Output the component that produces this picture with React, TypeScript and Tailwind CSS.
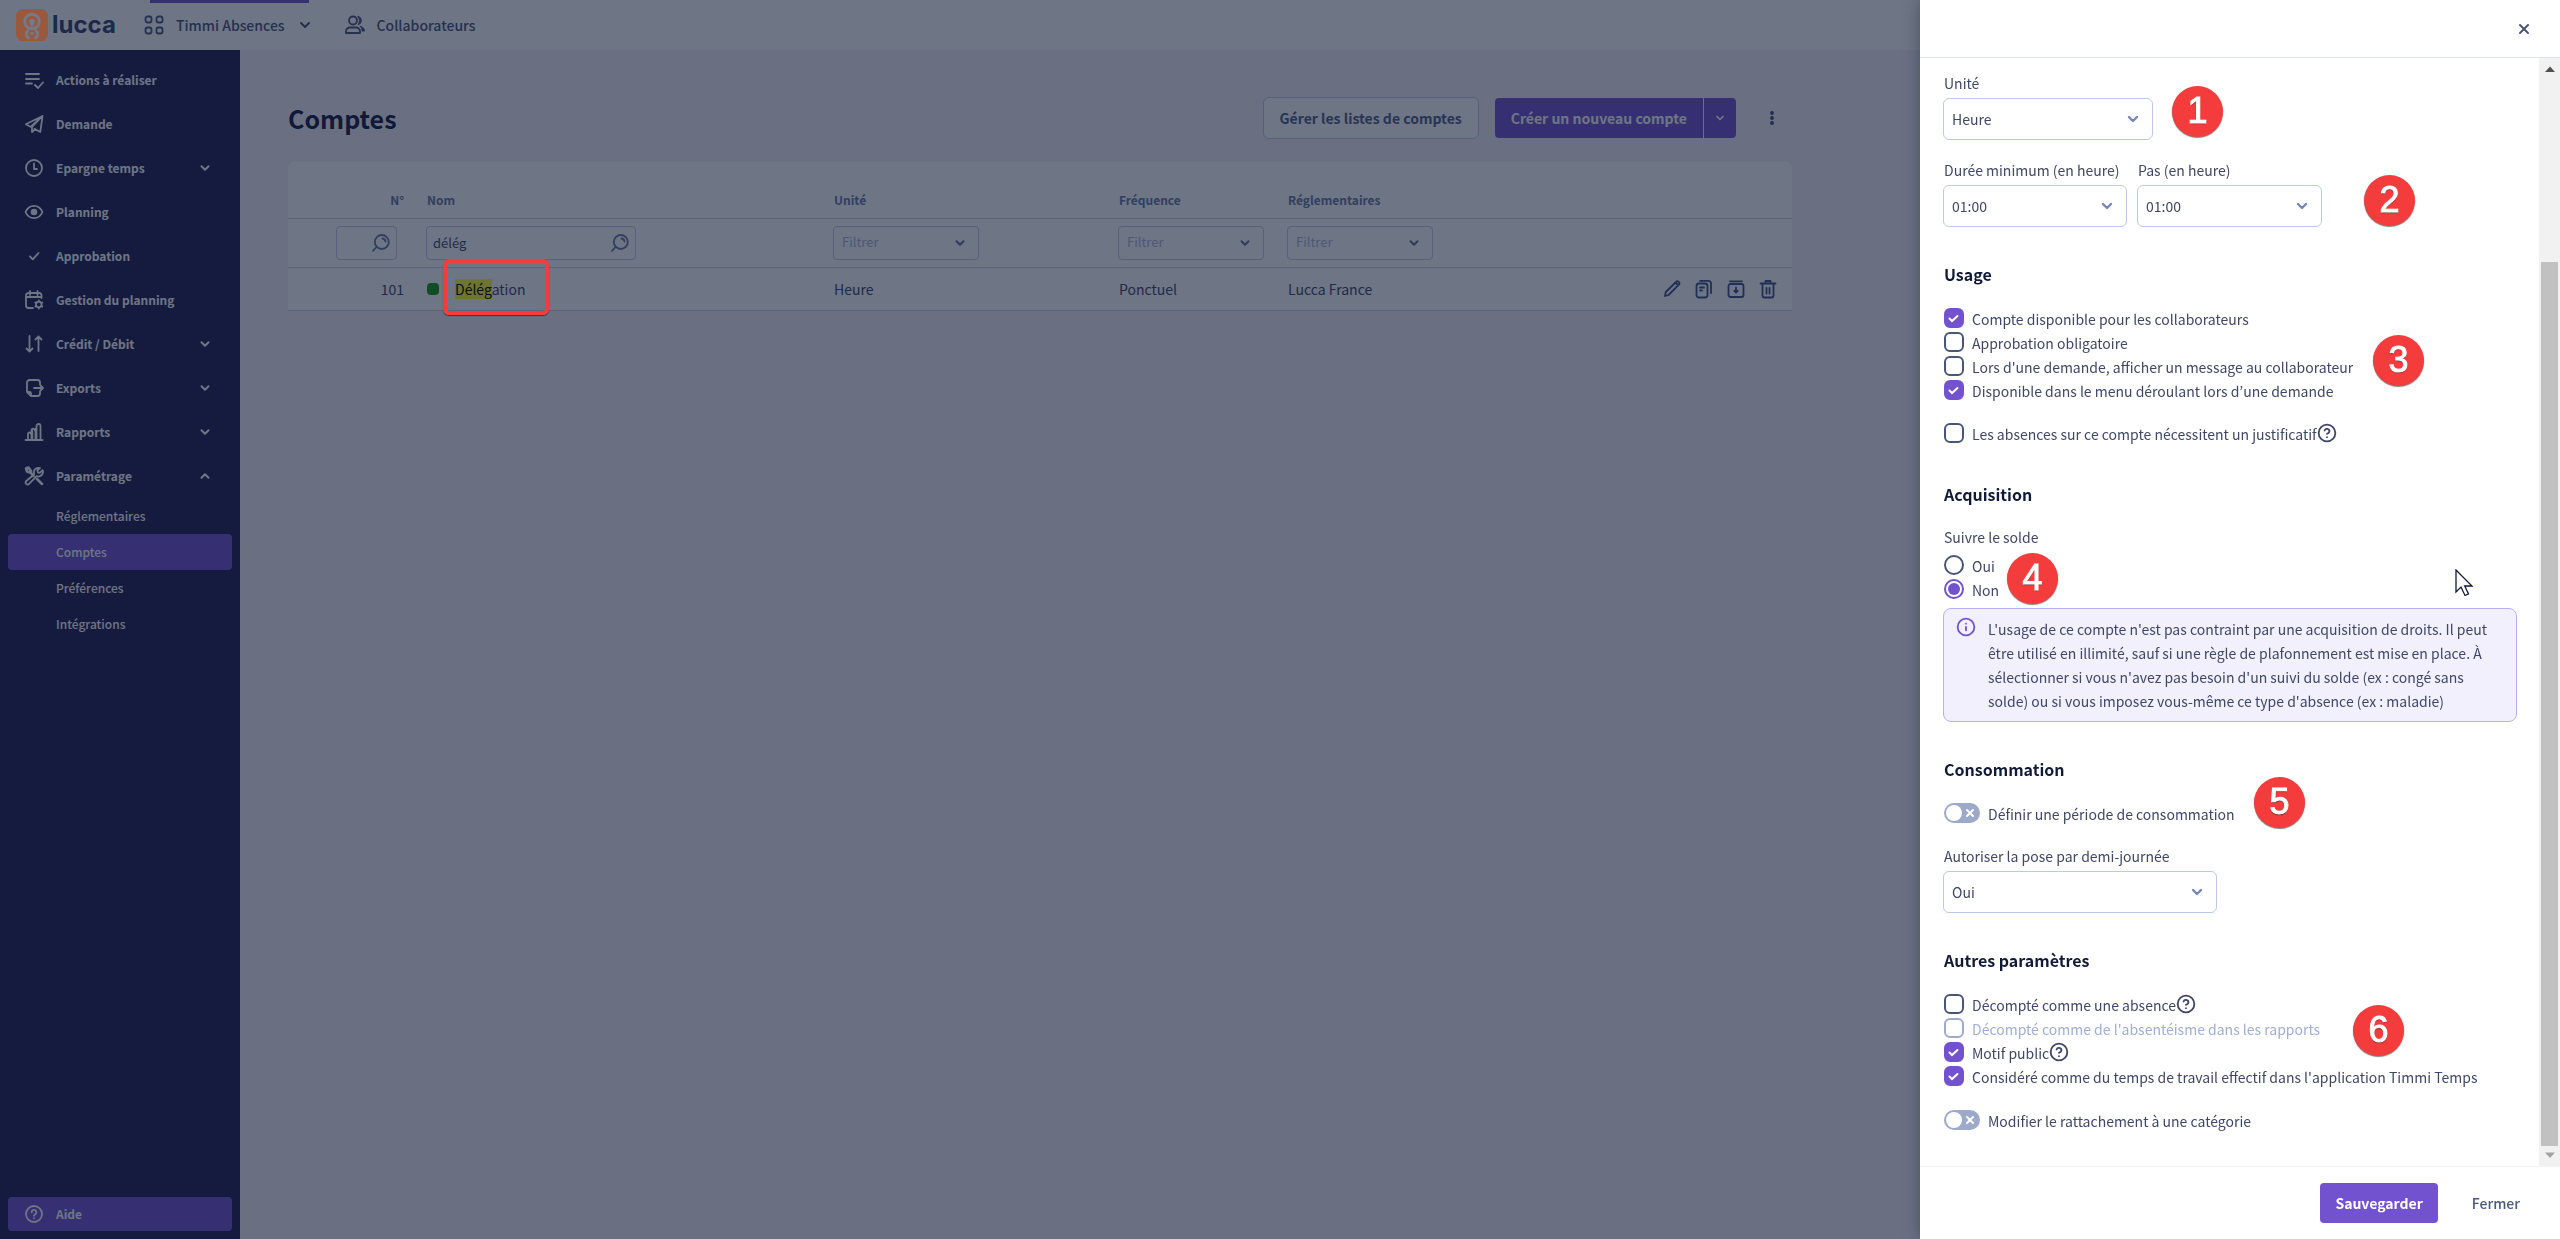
import type { ReactNode } from "react";
import { ChevronDown, ChevronUp, CircleHelp, Info, X } from "lucide-react";

/* ---------- icons ---------- */

type IconProps = { className?: string; children?: ReactNode };

function Icon({ className = "size-5", children }: IconProps) {
  return (
    <svg
      viewBox="0 0 20 20"
      className={className}
      fill="none"
      stroke="currentColor"
      strokeWidth="1.8"
      strokeLinecap="round"
      strokeLinejoin="round"
      aria-hidden="true"
    >
      {children}
    </svg>
  );
}

const ListCheck = () => (
  <Icon>
    <path d="M2 4h13M2 9h13M2 13.5h6M11 15l3 3 5-5.500" />
  </Icon>
);
const Plane = () => (
  <Icon>
    <path d="M18.500 2 1.800 10.200l4.700 2.600L18.500 2 16.300 18 10.500 14.800M18.500 2 8 13v5l3-3" />
  </Icon>
);
const Clock = () => (
  <Icon>
    <circle cx="10" cy="10" r="8" />
    <path d="M10 5.500V11h3" />
  </Icon>
);
const Eye = () => (
  <Icon>
    <path d="M1.500 10C5 1.800 15 1.800 18.500 10 15 18.200 5 18.200 1.500 10Z" />
    <circle cx="10" cy="10" r="2.400" fill="currentColor" />
  </Icon>
);
const SmallCheck = () => (
  <Icon>
    <path d="m6 10.500 2.800 2.800L14.500 7" />
  </Icon>
);
const CalendarGear = () => (
  <Icon>
    <path d="M9 18H4.500A2.500 2.500 0 0 1 2 15.500V5.500A2.500 2.500 0 0 1 4.500 3h11A2.500 2.500 0 0 1 17.500 5.500V8M2 7h15.500M6 1v4M13.500 1v4" />
    <circle cx="14.800" cy="14.500" r="2.800" />
    <path d="M14.800 10.500v1M14.800 17.500v1M11.300 12.500l.9.500M17.400 16l.9.500M18.300 12.500l-.9.500M12.200 16l-.9.500" />
  </Icon>
);
const UpDown = () => (
  <Icon>
    <path d="M5.500 2v15M2.500 14.500l3 3 3-3M14.500 17V2.500M11.500 5.500l3-3 3 3" />
  </Icon>
);
const ExportIcon = () => (
  <Icon>
    <path d="M16 6.500V4.500A2.500 2.500 0 0 0 13.500 2h-8A2.500 2.500 0 0 0 3 4.500V14l4 4h6.500a2.500 2.500 0 0 0 2.500-2.500v-2M3 14h2.500A1.500 1.500 0 0 1 7 15.500V18M10 10h9M16.500 7.500 19 10l-2.500 2.500" />
  </Icon>
);
const Bars = () => (
  <Icon>
    <path d="M1.500 18h17M4 17.500V12a1 1 0 0 1 3 0M8.300 17.500V9M7.500 17V8.500a1.500 1.500 0 0 1 3.500 0M11.500 17.500V7M12.500 17.500V4a2 2 0 0 1 4 0v13.500" />
  </Icon>
);
const Tools = () => (
  <Icon>
    <path d="M2 2.500 4.500 1.500 7 5v2L9.500 10M2 2.500 3 5.500l3 1.200M13 13l5 5" strokeWidth="2.500" />
    <path d="M14.500 1.800a4.600 4.600 0 0 0-4.300 6.400L2.300 15a2 2 0 0 0 2.800 2.900l7.500-7.700a4.600 4.600 0 0 0 6-6l-2.800 2.600-2-.4-.4-2 2.600-2.400a4 4 0 0 0-1.500-.2Z" />
  </Icon>
);
const Help = () => (
  <Icon>
    <circle cx="10" cy="10" r="8" />
    <path d="M7.700 8.300a2.300 2.300 0 1 1 3.500 1.900c-.8.500-1.200.8-1.200 1.600M10 14.200v.1" />
  </Icon>
);
const Apps = () => (
  <Icon className="size-5">
    <rect x="1.500" y="1.500" width="6" height="6" rx="2" />
    <rect x="12.500" y="1.500" width="6" height="6" rx="2" />
    <rect x="1.500" y="12.500" width="6" height="6" rx="2" />
    <rect x="12.500" y="12.500" width="6" height="6" rx="2" />
  </Icon>
);
const People = () => (
  <Icon className="size-5">
    <circle cx="8" cy="5.500" r="4" />
    <path d="M1 18v-1.500a4 4 0 0 1 4-4h6a4 4 0 0 1 4 4V18Z" />
    <path
      d="M13 1.300a4.300 4.300 0 0 1 0 8.400 7 7 0 0 0 0-8.400ZM15.500 11.500c2.500.5 4 2.200 4 4.500h-2.500c0-2-.5-3.500-1.500-4.500Z"
      fill="currentColor"
      strokeWidth="1"
    />
  </Icon>
);
const Search = () => (
  <Icon className="size-5">
    <circle cx="10.800" cy="9" r="7" />
    <path d="m5.500 14-3.500 3.800M11.500 5.500a3.500 3.500 0 0 1 3 3" />
  </Icon>
);
const Pencil = () => (
  <Icon className="size-5">
    <path d="M3 17l.8-4L14.500 2.500c1.600-1 3.600 1 2.800 2.700L6.600 16 3 17ZM14 4l2 2" />
  </Icon>
);
const Copy = () => (
  <Icon className="size-5">
    <rect x="2.500" y="4.500" width="11" height="14" rx="2.500" />
    <path d="M6 1.800h8.500A2.500 2.500 0 0 1 17 4.300V14M6 8.500h4M6 11.500h2" />
  </Icon>
);
const Archive = () => (
  <Icon className="size-5">
    <rect x="2.500" y="5" width="15" height="13" rx="2" />
    <path d="M4 2.300h12M10 8.500v5M8.300 11.800 10 13.500l1.700-1.700" />
  </Icon>
);
const Trash = () => (
  <Icon className="size-5">
    <path d="M2.500 4.500h15M7.500 4.500V2h5v2.500M4.500 5v11.500A2 2 0 0 0 6.500 18.500h7a2 2 0 0 0 2-2V5M8.500 9v5.500M11.500 9v5.500" />
  </Icon>
);

function Logo() {
  return (
    <svg viewBox="0 0 32 32" className="size-8" aria-hidden="true">
      <rect width="32" height="32" rx="7" fill="#99593f" />
      <g fill="none" stroke="#757a89" strokeWidth="3">
        <circle cx="16" cy="12.500" r="7.300" />
        <path d="M13.500 29.500A4.600 4.600 0 0 1 13 21M18.500 29.500A4.600 4.600 0 0 0 19 21" />
      </g>
      <circle cx="16" cy="12.500" r="2.800" fill="#757a89" />
      <path d="M14.500 12.500h3v5h-3Z" fill="#757a89" />
      <circle cx="16" cy="24.500" r="1.800" fill="#757a89" />
    </svg>
  );
}

/* ---------- navigation ---------- */

type NavEntry = { label: string; icon: ReactNode; state?: "closed" | "open" };

const nav: NavEntry[] = [
  { label: "Actions à réaliser", icon: <ListCheck /> },
  { label: "Demande", icon: <Plane /> },
  { label: "Epargne temps", icon: <Clock />, state: "closed" },
  { label: "Planning", icon: <Eye /> },
  { label: "Approbation", icon: <SmallCheck /> },
  { label: "Gestion du planning", icon: <CalendarGear /> },
  { label: "Crédit / Débit", icon: <UpDown />, state: "closed" },
  { label: "Exports", icon: <ExportIcon />, state: "closed" },
  { label: "Rapports", icon: <Bars />, state: "closed" },
  { label: "Paramétrage", icon: <Tools />, state: "open" },
];

const subNav = ["Réglementaires", "Comptes", "Préférences", "Intégrations"];

function Sidebar() {
  return (
    <nav className="flex w-60 shrink-0 flex-col bg-[#201e50] px-2 py-2 text-xs font-bold text-white">
      {nav.map(({ label, icon, state }) => (
        <a key={label} href="#" className="flex h-11 items-center gap-3 pr-5 pl-4">
          {icon}
          <span className="flex-1">{label}</span>
          {state === "closed" && <ChevronDown className="size-3.5" strokeWidth={3.5} />}
          {state === "open" && <ChevronUp className="size-3.5" strokeWidth={3.5} />}
        </a>
      ))}
      <div className="flex flex-col font-medium">
        {subNav.map((label) => (
          <a
            key={label}
            href="#"
            className={
              label === "Comptes"
                ? "flex h-9 items-center rounded bg-[#7352cf] pl-12"
                : "flex h-9 items-center pl-12"
            }
          >
            {label}
          </a>
        ))}
      </div>
      <a href="#" className="mt-auto flex h-[34px] items-center gap-3 rounded bg-[#7352cf] pl-4">
        <Help />
        Aide
      </a>
    </nav>
  );
}

function TopBar() {
  return (
    <header className="flex h-[50px] shrink-0 items-center bg-white pl-4 text-sm font-medium text-[#4a557c] shadow-sm">
      <a href="#" className="flex w-[134px] items-center gap-1">
        <span className="relative z-20">
          <Logo />
        </span>
        <span className="font-['Inter',sans-serif] text-2xl font-bold text-[#383f70]">lucca</span>
      </a>
      <button className="flex h-full items-center gap-3 border-t-[3px] border-[#7352cf] pb-[3px]">
        <span className="-ml-1.5">
          <Apps />
        </span>
        Timmi Absences
        <ChevronDown className="-mr-1 size-4" strokeWidth={3} />
      </button>
      <a href="#" className="ml-9 flex items-center gap-3">
        <People />
        Collaborateurs
      </a>
    </header>
  );
}

/* ---------- accounts table ---------- */

function FilterSelect({ label }: { label: string }) {
  return (
    <div className="grid w-[146px] items-center">
      <select
        aria-label={label}
        className="col-start-1 row-start-1 h-[34px] w-full appearance-none rounded border border-[#c5cbf0] bg-transparent px-2 text-[13px] text-[#adb7df]"
      >
        <option>Filtrer</option>
      </select>
      <ChevronDown
        className="pointer-events-none col-start-1 row-start-1 mr-3 size-3.5 justify-self-end text-[#5f6f9c]"
        strokeWidth={3.5}
      />
    </div>
  );
}

function SearchBox({ label, value, wide }: { label: string; value: string; wide?: boolean }) {
  return (
    <div className={wide ? "grid w-[210px] items-center" : "ml-auto grid w-[61px] items-center"}>
      <input
        type="text"
        aria-label={label}
        defaultValue={value}
        className="col-start-1 row-start-1 h-[34px] w-full rounded border border-[#c5cbf0] bg-transparent pr-8 pl-1.5 text-[13px] text-[#404a70]"
      />
      <span className="pointer-events-none col-start-1 row-start-1 mr-1.5 justify-self-end text-[#6476a6]">
        <Search />
      </span>
    </div>
  );
}

function Accounts() {
  return (
    <main className="flex-1 bg-[#f6f3fb] px-12">
      <div className="max-w-[1504px]">
        <div className="flex items-center pt-[47px] pb-[22px]">
          <h1 className="flex-1 text-[25px] leading-[42px] font-bold text-[#141b40]">Comptes</h1>
          <button className="h-[42px] rounded-md border border-[#c5cbf0] bg-white px-4 text-sm font-bold text-[#50608c]">
            Gérer les listes de comptes
          </button>
          <div className="ml-4 flex h-10 text-sm font-bold text-white">
            <button className="rounded-l bg-[#7352cf] px-4">Créer un nouveau compte</button>
            <button
              aria-label="Autres créations"
              className="ml-px flex w-8 items-center justify-center rounded-r bg-[#7352cf]"
            >
              <ChevronDown className="size-3" strokeWidth={3.5} />
            </button>
          </div>
          <button aria-label="Plus d'actions" className="ml-4 flex w-10 justify-center text-[#3c4a7a]">
            <svg viewBox="0 0 4 14" className="h-3.5 w-1" fill="currentColor" aria-hidden="true">
              <circle cx="2" cy="2" r="1.900" />
              <circle cx="2" cy="7" r="1.900" />
              <circle cx="2" cy="12" r="1.900" />
            </svg>
          </button>
        </div>
        <div className="rounded-t-lg bg-white">
          <table className="w-full table-fixed text-left text-sm text-[#3c4670]">
            <colgroup>
              <col className="w-[128px]" />
              <col className="w-[407px]" />
              <col className="w-[285px]" />
              <col className="w-[169px]" />
              <col />
              <col className="w-[160px]" />
            </colgroup>
            <thead>
              <tr className="h-[57px] border-b border-[#d0d2f8] align-bottom text-xs leading-9 text-[#6878a8]">
                <th className="px-3 text-right font-bold">N°</th>
                <th className="px-[11px] font-bold">Nom</th>
                <th className="px-[11px] font-bold">Unité</th>
                <th className="px-[11px] font-bold">Fréquence</th>
                <th className="px-[11px] font-bold">Réglementaires</th>
                <td />
              </tr>
              <tr className="h-[49px] border-b border-[#d0d2f8]">
                <td className="pr-[19px]">
                  <SearchBox label="Filtrer par numéro" value="" />
                </td>
                <td className="px-2.5">
                  <SearchBox label="Filtrer par nom" value="délég" wide />
                </td>
                <td className="px-2.5">
                  <FilterSelect label="Unité" />
                </td>
                <td className="px-2.5">
                  <FilterSelect label="Fréquence" />
                </td>
                <td className="px-2.5">
                  <FilterSelect label="Réglementaires" />
                </td>
                <td />
              </tr>
            </thead>
            <tbody>
              <tr className="h-[43px] border-b border-[#d0d2f8]">
                <td className="px-3 text-right">101</td>
                <td className="px-[11px]">
                  <div className="flex items-center gap-4">
                    <span className="size-3 rounded bg-[#189c10]" />
                    <span className="relative leading-5">
                      <mark className="bg-[#ffff2e] text-black">Délég</mark>ation
                      <span className="absolute -top-5 -right-6 -bottom-4 -left-3 z-20 rounded-md border-4 border-[#f43c3c] shadow-[0_1px_1px_#00000080]" />
                    </span>
                  </div>
                </td>
                <td className="px-[11px]">Heure</td>
                <td className="px-[11px]">Ponctuel</td>
                <td className="px-[11px]">Lucca France</td>
                <td className="px-3">
                  <div className="flex justify-end gap-3 pr-0.5 text-[#3f5088]">
                    <button aria-label="Modifier">
                      <Pencil />
                    </button>
                    <button aria-label="Dupliquer">
                      <Copy />
                    </button>
                    <button aria-label="Archiver">
                      <Archive />
                    </button>
                    <button aria-label="Supprimer">
                      <Trash />
                    </button>
                  </div>
                </td>
              </tr>
            </tbody>
          </table>
        </div>
      </div>
    </main>
  );
}

/* ---------- side panel ---------- */

function SelectField({ id, label, value, width }: { id: string; label: string; value: string; width: string }) {
  return (
    <div className={width}>
      <label htmlFor={id} className="block px-px leading-6">
        {label}
      </label>
      <div className="mt-[3px] grid items-center">
        <select
          id={id}
          className="col-start-1 row-start-1 h-[42px] w-full appearance-none rounded-md border border-[#bccaea] bg-white px-2 text-[#3f4766]"
        >
          <option>{value}</option>
        </select>
        <ChevronDown
          className="pointer-events-none col-start-1 row-start-1 mr-3 size-4 justify-self-end text-[#7485b5]"
          strokeWidth={3.5}
        />
      </div>
    </div>
  );
}

type CheckProps = { label: string; checked?: boolean; disabled?: boolean; help?: boolean };

function Check({ label, checked, disabled, help }: CheckProps) {
  return (
    <div className={disabled ? "flex h-6 items-start text-[#9fafd3]" : "flex h-6 items-start"}>
      <label className="flex gap-2">
        <span className="grid size-5">
          <input
            type="checkbox"
            defaultChecked={checked}
            disabled={disabled}
            className="col-start-1 row-start-1 size-5 appearance-none rounded-md border-2 border-[#485577] bg-white checked:border-[#7352cf] checked:bg-[#7352cf] disabled:border-[#9fabcb]"
          />
          {checked && (
            <svg
              viewBox="0 0 20 20"
              className="pointer-events-none col-start-1 row-start-1 size-5"
              fill="none"
              stroke="white"
              strokeWidth="2"
              strokeLinecap="round"
              aria-hidden="true"
            >
              <path d="m5.500 10.500 2.500 2.500L13.500 8" />
            </svg>
          )}
        </span>
        <span className="leading-[22px]">{label}</span>
      </label>
      {help && <CircleHelp className="size-5 text-[#3f4766]" strokeWidth={2.2} aria-label="Aide" />}
    </div>
  );
}

function RadioRow({ label, checked }: { label: string; checked?: boolean }) {
  return (
    <label className="flex h-6 gap-2">
      <input
        type="radio"
        name="solde"
        defaultChecked={checked}
        className="size-5 appearance-none rounded-full border-2 border-[#485577] bg-white bg-clip-content p-0.5 checked:border-[#7352cf] checked:bg-[#7352cf]"
      />
      <span className="leading-[22px]">{label}</span>
    </label>
  );
}

function Toggle({ label }: { label: string }) {
  return (
    <label className="flex h-6 gap-2">
      <span className="grid h-5 w-9 items-center">
        <input
          type="checkbox"
          role="switch"
          className="col-start-1 row-start-1 h-5 w-9 appearance-none rounded-full bg-[#9da9c9]"
        />
        <span className="pointer-events-none col-start-1 row-start-1 flex items-center justify-between pr-1 pl-0.5">
          <span className="size-4 rounded-full bg-white" />
          <X className="size-3 text-white" strokeWidth={4} />
        </span>
      </span>
      <span className="leading-[22px]">{label}</span>
    </label>
  );
}

function Section({ title, children }: { title: string; children: ReactNode }) {
  return (
    <section>
      <h2 className="text-base leading-6 font-bold text-[#101a37]">{title}</h2>
      {children}
    </section>
  );
}

function Scrollbar() {
  return (
    <div className="flex w-[21px] shrink-0 flex-col items-center bg-[#f1f1f1]" aria-hidden="true">
      <svg viewBox="0 0 10 20" className="h-5 w-2.5 shrink-0" fill="#505050">
        <path d="M0 14h10L5 8.500Z" />
      </svg>
      <div className="flex-[184]" />
      <div className="w-[17px] flex-[884] bg-[#c1c1c1]" />
      <svg viewBox="0 0 10 20" className="h-5 w-2.5 shrink-0" fill="#a3a3a3">
        <path d="M0 6.500h10L5 12Z" />
      </svg>
    </div>
  );
}

const badges = [
  { n: 1, at: "top-[86px] left-[252px]" },
  { n: 2, at: "top-[175px] left-[444px]" },
  { n: 3, at: "top-[335px] left-[453px]" },
  { n: 4, at: "top-[553px] left-[87px]" },
  { n: 5, at: "top-[777px] left-[334px]" },
  { n: 6, at: "top-[1005px] left-[433px]" },
];

function Annotations() {
  return (
    <>
      {badges.map(({ n, at }) => (
        <span
          key={n}
          className={`${at} absolute size-[51px] rounded-full bg-[#f43c3c] text-center font-['Liberation_Sans',sans-serif] text-[36px] leading-[49px] text-white shadow-[0_1px_1px_#00000080] [-webkit-text-stroke:1px_white] [text-shadow:0_1px_1px_#000000b0]`}
        >
          {n}
        </span>
      ))}
      <svg
        viewBox="0 0 19 28"
        className="absolute top-[569px] left-[535px] h-7 w-[19px]"
        fill="white"
        stroke="#101a37"
        strokeWidth="1.300"
        aria-hidden="true"
      >
        <path d="M1 1v22l5-5 4 8.500 3.500-1.600L9.700 17H17Z" />
      </svg>
    </>
  );
}

function Panel() {
  return (
    <aside
      role="dialog"
      aria-label="Paramètres du compte"
      className="fixed inset-y-0 right-0 z-30 flex w-[640px] flex-col bg-white text-sm text-[#3f4766] shadow-[0_0_16px_#0e193266]"
    >
      <div className="flex h-[58px] shrink-0 items-center justify-end border-b border-[#dbe3ef] pr-7">
        <button aria-label="Fermer le panneau" className="text-[#485577]">
          <X className="size-4" strokeWidth={3} />
        </button>
      </div>
      <div className="flex min-h-0 flex-1">
        <form className="flex-1 overflow-hidden pt-[13px] pr-[22px] pl-6">
          <div className="-ml-px">
            <SelectField id="unite" label="Unité" value="Heure" width="w-[210px]" />
            <div className="mt-[18px] flex gap-2.5">
              <SelectField id="duree" label="Durée minimum (en heure)" value="01:00" width="w-[184px]" />
              <SelectField id="pas" label="Pas (en heure)" value="01:00" width="w-[185px]" />
            </div>
          </div>
          <div className="mt-[35px] flex flex-col gap-[35px]">
            <Section title="Usage">
              <div className="mt-[22px]">
                <Check label="Compte disponible pour les collaborateurs" checked />
                <Check label="Approbation obligatoire" />
                <Check label="Lors d'une demande, afficher un message au collaborateur" />
                <Check label="Disponible dans le menu déroulant lors d’une demande" checked />
              </div>
              <div className="mt-[19px]">
                <Check label="Les absences sur ce compte nécessitent un justificatif" help />
              </div>
            </Section>
            <Section title="Acquisition">
              <fieldset className="mt-[19px]">
                <legend className="mb-1.5 leading-6">Suivre le solde</legend>
                <RadioRow label="Oui" />
                <RadioRow label="Non" checked />
              </fieldset>
              <div className="mt-[5px] -ml-px flex gap-3 rounded-lg border border-[#baadf5] bg-[#f1f0fc] py-2 pr-4 pl-3">
                <Info className="size-5 shrink-0 text-[#7352cf]" strokeWidth={2.2} />
                <p className="leading-6">
                  L'usage de ce compte n'est pas contraint par une acquisition de droits. Il peut être utilisé en
                  illimité, sauf si une règle de plafonnement est mise en place. À sélectionner si vous n'avez pas
                  besoin d'un suivi du solde (ex : congé sans solde) ou si vous imposez vous-même ce type d'absence (ex
                  : maladie)
                </p>
              </div>
            </Section>
            <Section title="Consommation">
              <div className="mt-[22px]">
                <Toggle label="Définir une période de consommation" />
              </div>
              <div className="mt-[17px] -ml-px">
                <SelectField id="pose" label="Autoriser la pose par demi-journée" value="Oui" width="w-[274px]" />
              </div>
            </Section>
            <Section title="Autres paramètres">
              <div className="mt-[22px]">
                <Check label="Décompté comme une absence" help />
                <Check label="Décompté comme de l'absentéisme dans les rapports" disabled />
                <Check label="Motif public" checked help />
                <Check
                  label="Considéré comme du temps de travail effectif dans l'application Timmi Temps"
                  checked
                />
              </div>
              <div className="mt-5">
                <Toggle label="Modifier le rattachement à une catégorie" />
              </div>
            </Section>
          </div>
        </form>
        <Scrollbar />
      </div>
      <div className="flex h-[73px] shrink-0 items-center justify-end gap-[34px] border-t border-[#f3f3f6] pr-10">
        <button className="h-10 rounded bg-[#7352cf] px-[15px] font-bold text-white">Sauvegarder</button>
        <button className="font-medium text-[#4a587e]">Fermer</button>
      </div>
      <Annotations />
    </aside>
  );
}

export default function App() {
  return (
    <div className="flex min-h-screen flex-col font-['Noto_Sans_CJK_KR',sans-serif]">
      <TopBar />
      <div className="flex flex-1">
        <Sidebar />
        <Accounts />
      </div>
      <div className="fixed inset-0 z-10 bg-[#0e1932]/60" />
      <Panel />
    </div>
  );
}
